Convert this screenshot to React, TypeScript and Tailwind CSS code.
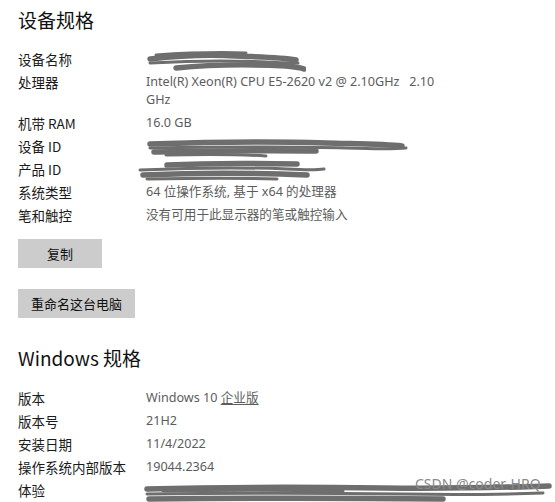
import React from "react";

const labelFont = { fontFamily: '"Noto Sans CJK SC", "Noto Sans", sans-serif' };
const valueFont = { fontFamily: '"Noto Sans", "Noto Sans CJK SC", sans-serif' };

function Scribble({ w, h, paths }: { w: number; h: number; paths: string[] }) {
  return (
    <svg width={w} height={h} viewBox={`0 0 ${w} ${h}`} className="block">
      {paths.map((d, i) => (
        <path
          key={i}
          d={d}
          fill="none"
          stroke="#6e6e6e"
          strokeWidth={i % 2 === 0 ? 5.5 : 3}
          strokeLinecap="round"
          strokeLinejoin="round"
        />
      ))}
    </svg>
  );
}

function Row({ label, children }: { label: string; children: React.ReactNode }) {
  return (
    <div className="flex leading-[18px]">
      <div className="w-[128px] shrink-0 text-[13.5px] text-[#1b1b1b]">{label}</div>
      <div className="text-[12.6px] text-[#5c5c5c]" style={valueFont}>
        {children}
      </div>
    </div>
  );
}

export default function App() {
  return (
    <div
      className="relative h-[502px] w-[555px] overflow-hidden bg-white pl-[18px] pt-[7px]"
      style={labelFont}
    >
      <h1 className="h-[26px] text-[19px] leading-[26px] text-[#111]">设备规格</h1>

      <div className="mt-[17px] flex flex-col gap-[5px]">
        <Row label="设备名称">
          <div className="h-[18px] w-[160px]">
            <Scribble
              w={160}
              h={22}
              paths={[
                "M4 9 C30 6 60 4 90 6 C115 7 135 7 150 10",
                "M4 13 C40 11 80 10 120 12 C135 13 145 13 152 13",
                "M30 18 C60 15 100 14 140 16 C150 17 156 18 158 19",
                "M10 5 C40 3 70 2 100 3",
              ]}
            />
          </div>
        </Row>
        <Row label="处理器">
          <span className="whitespace-pre">
            Intel(R) Xeon(R) CPU E5-2620 v2 @ 2.10GHz   2.10
            <br />
            GHz
          </span>
        </Row>
        <Row label="机带 RAM">16.0 GB</Row>
        <Row label="设备 ID">
          <div className="h-[18px] w-[262px]">
            <Scribble
              w={262}
              h={22}
              paths={[
                "M4 7 C60 5 120 4 180 6 C220 7 240 7 256 9",
                "M4 11 C70 10 140 9 200 11 C230 12 250 12 260 11",
                "M8 15 C60 14 110 13 170 14",
                "M20 18 C60 17 90 17 120 19",
              ]}
            />
          </div>
        </Row>
        <Row label="产品 ID">
          <div className="-ml-[9px] h-[18px] w-[190px]">
            <Scribble
              w={190}
              h={22}
              paths={[
                "M30 5 C70 3 110 3 160 4",
                "M3 10 C50 8 100 7 150 9 C170 10 180 10 187 9",
                "M6 15 C50 13 100 12 170 15",
                "M10 19 C60 18 110 18 140 19",
              ]}
            />
          </div>
        </Row>
        <Row label="系统类型">64 位操作系统, 基于 x64 的处理器</Row>
        <Row label="笔和触控">没有可用于此显示器的笔或触控输入</Row>
      </div>

      <button className="mt-[15px] flex h-[29px] w-[84px] items-center justify-center bg-[#cccccc] text-[13px] text-[#111]">
        复制
      </button>
      <button className="mt-[21px] flex h-[29px] w-[117px] items-center justify-center bg-[#cccccc] text-[13px] text-[#111]">
        重命名这台电脑
      </button>

      <h2 className="mt-[27px] h-[26px] text-[19px] leading-[26px] text-[#111]">Windows 规格</h2>

      <div className="mt-[18px] flex flex-col gap-[5px]">
        <Row label="版本">
          Windows 10 <span className="underline underline-offset-2">企业版</span>
        </Row>
        <Row label="版本号">21H2</Row>
        <Row label="安装日期">11/4/2022</Row>
        <Row label="操作系统内部版本">19044.2364</Row>
        <Row label="体验">
          <div className="-ml-[3px] h-[18px] w-[410px]">
            <Scribble
              w={410}
              h={22}
              paths={[
                "M4 8 C80 6 160 6 240 7 C320 8 370 6 406 5",
                "M4 13 C90 12 180 12 260 13 C320 14 370 13 400 12",
                "M6 18 C100 17 200 17 300 18",
                "M20 10 C80 9 140 9 200 10",
              ]}
            />
          </div>
        </Row>
      </div>

      <div
        className="absolute left-[415px] top-[475px] text-[14px] leading-[18px] text-[#8a8a8a]"
        style={{ fontFamily: '"Noto Sans", sans-serif' }}
      >
        CSDN @coder-HRQ
      </div>
    </div>
  );
}
